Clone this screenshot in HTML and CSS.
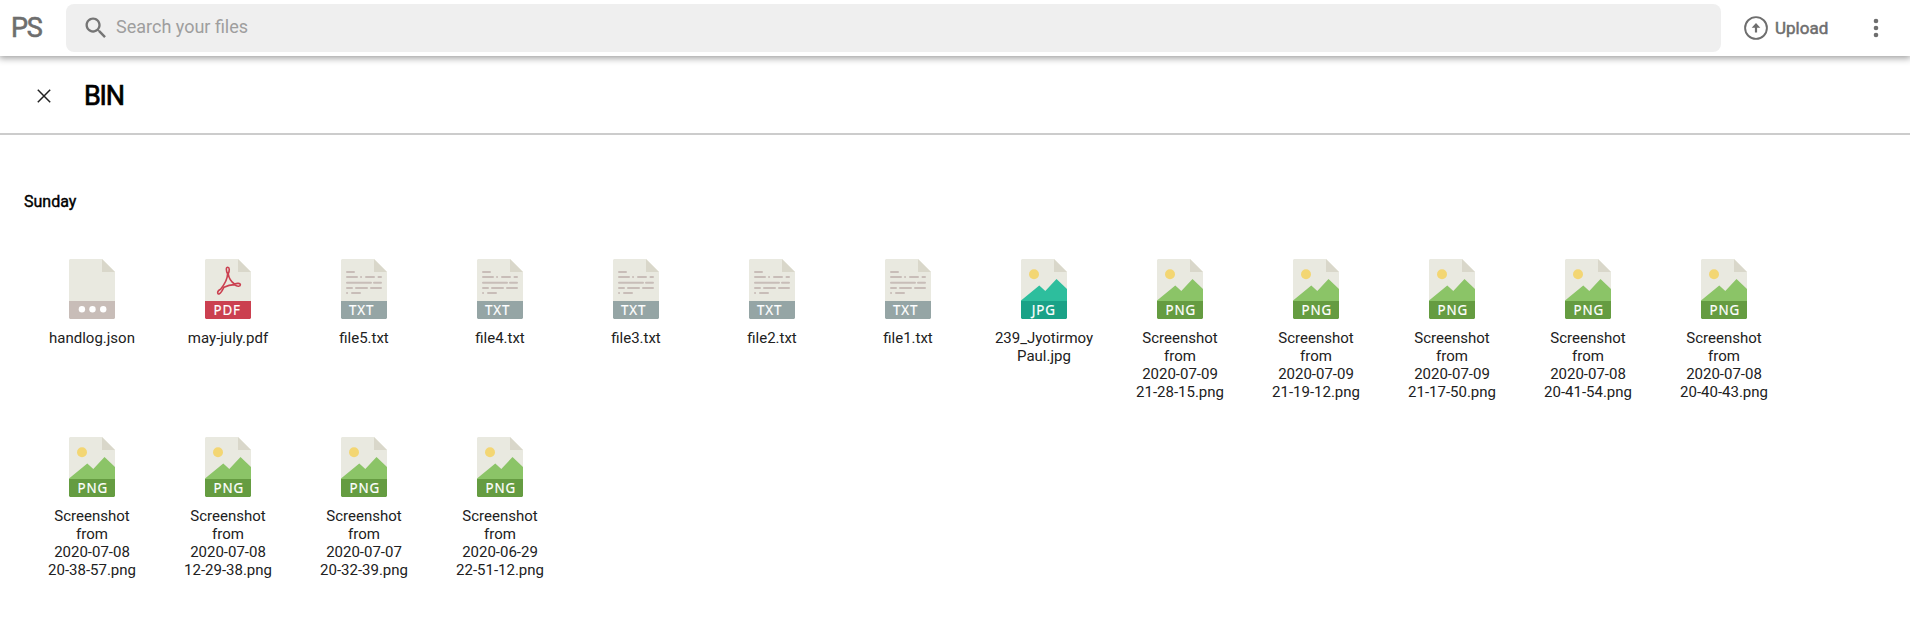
FILE: index.html
```html
<!DOCTYPE html>
<html lang="en">
<head>
<meta charset="utf-8">
<title>PS - Bin</title>
<link rel="stylesheet" href="styles.css">
</head>
<body>
<svg class="sprite" width="0" height="0">
  <symbol id="page" viewBox="0 0 46 60">
    <path fill="#e9e9e0" d="M1 0H33L46 13V43H0V1Z"/>
    <path fill="#d9d7ca" d="M33 0V13H46Z"/>
  </symbol>
  <symbol id="json" viewBox="0 0 46 60">
    <use href="#page"/>
    <path fill="#c8bdb8" d="M0 42H46V59L45 60H1L0 59Z"/>
    <g fill="#fff"><circle cx="12.900" cy="50.300" r="3.200"/><circle cx="23.500" cy="50.300" r="3.200"/><circle cx="34.200" cy="50.300" r="3.200"/></g>
  </symbol>
  <symbol id="pdf" viewBox="0 0 46 60">
    <use href="#page"/>
    <path fill="#cb4050" d="M0 42H46V59L45 60H1L0 59Z"/>
    <path fill="none" stroke="#cb4050" stroke-width="1.600" stroke-linejoin="round" d="M22.800 8.200C20.800 8.200 21 11.500 22.600 14.800C22.600 19 19 26 15.600 30.200C11.500 32 12.300 35.800 14.400 34.800C16.500 33.800 18 30 19 28.200C22 26.800 26 25.800 29.400 25.600C32.500 28.200 35.500 27.200 35.400 25.600C35.200 24 32 24.200 29.400 24.900C26 22.500 23.800 18.500 23.200 14.800C24.800 11.500 24.500 8.200 22.800 8.200Z"/>
  </symbol>
  <symbol id="txt" viewBox="0 0 46 60">
    <use href="#page"/>
    <path fill="none" stroke="#c8bdb8" stroke-width="2" stroke-linecap="round" d="M6 13H13M6 18H16M20 18h.1M25 18H33M37.500 18H40M6 23.700H30M33 23.700H40M6 29H11M15 29H26M30 29H40M6 34h.1M11 34H19"/>
    <path fill="#95a5a5" d="M0 42H46V59L45 60H1L0 59Z"/>
  </symbol>
  <symbol id="jpg" viewBox="0 0 46 60">
    <use href="#page"/>
    <circle cx="13" cy="15.300" r="5" fill="#f3d673"/>
    <path fill="#2dbe9d" d="M0 41.500L18.300 26.500L24.300 32L35.500 20L46 30V43H0Z"/>
    <path fill="#1aa287" d="M0 42H46V59L45 60H1L0 59Z"/>
  </symbol>
  <symbol id="png" viewBox="0 0 46 60">
    <use href="#page"/>
    <circle cx="13" cy="15.300" r="5" fill="#f3d673"/>
    <path fill="#8bc467" d="M0 41.500L18.300 26.500L24.300 32L35.500 20L46 30V43H0Z"/>
    <path fill="#659c41" d="M0 42H46V59L45 60H1L0 59Z"/>
  </symbol>
</svg>

<header class="topbar">
  <div class="logo">PS</div>
  <div class="search">
    <svg class="search-icon" width="28" height="28" viewBox="0 0 24 24"><path fill="#757575" d="M15.500 14h-.79l-.28-.27C15.410 12.590 16 11.110 16 9.500 16 5.910 13.090 3 9.500 3S3 5.910 3 9.500 5.910 16 9.500 16c1.610 0 3.090-.59 4.230-1.570l.27.28v.79l5 4.990L20.490 19l-4.990-5zm-6 0C7.010 14 5 11.990 5 9.500S7.010 5 9.500 5 14 7.010 14 9.500 11.990 14 9.500 14z"/></svg>
    <span class="placeholder">Search your files</span>
  </div>
  <div class="upload">
    <svg width="24" height="24" viewBox="0 0 24 24"><circle cx="12" cy="12" r="10.900" fill="none" stroke="#6e6e6e" stroke-width="1.900"/><path fill="#6e6e6e" d="M12 7L16.300 11.800H13.100V16.600H10.900V11.800H7.700Z"/></svg>
    <span>Upload</span>
  </div>
  <svg class="more" width="6" height="20" viewBox="0 0 6 20"><g fill="#6e6e6e"><circle cx="3" cy="3" r="2.300"/><circle cx="3" cy="10" r="2.300"/><circle cx="3" cy="17" r="2.300"/></g></svg>
</header>

<div class="titlebar">
  <svg class="close" width="14" height="14" viewBox="0 0 14 14"><path d="M.8.8L13.200 13.200M13.200.8L.8 13.200" stroke="#222" stroke-width="1.500"/></svg>
  <h1>BIN</h1>
</div>

<main>
  <h2>Sunday</h2>
  <div class="files">
    <div class="file"><svg class="icon"><use href="#json"/></svg><p>handlog.json</p></div>
    <div class="file"><svg class="icon"><use href="#pdf"/><text class="tag" x="9.600" y="56">PDF</text></svg><p>may-july.pdf</p></div>
    <div class="file"><svg class="icon"><use href="#txt"/><text class="tag" x="8.900" y="56">TXT</text></svg><p>file5.txt</p></div>
    <div class="file"><svg class="icon"><use href="#txt"/><text class="tag" x="8.900" y="56">TXT</text></svg><p>file4.txt</p></div>
    <div class="file"><svg class="icon"><use href="#txt"/><text class="tag" x="8.900" y="56">TXT</text></svg><p>file3.txt</p></div>
    <div class="file"><svg class="icon"><use href="#txt"/><text class="tag" x="8.900" y="56">TXT</text></svg><p>file2.txt</p></div>
    <div class="file"><svg class="icon"><use href="#txt"/><text class="tag" x="8.900" y="56">TXT</text></svg><p>file1.txt</p></div>
    <div class="file"><svg class="icon"><use href="#jpg"/><text class="tag" x="12" y="56">JPG</text></svg><p>239_Jyotirmoy<br>Paul.jpg</p></div>
    <div class="file"><svg class="icon"><use href="#png"/><text class="tag" x="9.600" y="56">PNG</text></svg><p>Screenshot<br>from<br>2020-07-09<br>21-28-15.png</p></div>
    <div class="file"><svg class="icon"><use href="#png"/><text class="tag" x="9.600" y="56">PNG</text></svg><p>Screenshot<br>from<br>2020-07-09<br>21-19-12.png</p></div>
    <div class="file"><svg class="icon"><use href="#png"/><text class="tag" x="9.600" y="56">PNG</text></svg><p>Screenshot<br>from<br>2020-07-09<br>21-17-50.png</p></div>
    <div class="file"><svg class="icon"><use href="#png"/><text class="tag" x="9.600" y="56">PNG</text></svg><p>Screenshot<br>from<br>2020-07-08<br>20-41-54.png</p></div>
    <div class="file"><svg class="icon"><use href="#png"/><text class="tag" x="9.600" y="56">PNG</text></svg><p>Screenshot<br>from<br>2020-07-08<br>20-40-43.png</p></div>
    <div class="file"><svg class="icon"><use href="#png"/><text class="tag" x="9.600" y="56">PNG</text></svg><p>Screenshot<br>from<br>2020-07-08<br>20-38-57.png</p></div>
    <div class="file"><svg class="icon"><use href="#png"/><text class="tag" x="9.600" y="56">PNG</text></svg><p>Screenshot<br>from<br>2020-07-08<br>12-29-38.png</p></div>
    <div class="file"><svg class="icon"><use href="#png"/><text class="tag" x="9.600" y="56">PNG</text></svg><p>Screenshot<br>from<br>2020-07-07<br>20-32-39.png</p></div>
    <div class="file"><svg class="icon"><use href="#png"/><text class="tag" x="9.600" y="56">PNG</text></svg><p>Screenshot<br>from<br>2020-06-29<br>22-51-12.png</p></div>
  </div>
</main>
</body>
</html>
```
FILE: styles.css
```css
* { box-sizing: border-box; }
body {
  margin: 0;
  height: 625px;
  overflow: hidden;
  background: #fff;
  font-family: Roboto, "Liberation Sans", sans-serif;
}
.sprite { display: block; }
h1, h2, p { margin: 0; }
.topbar {
  display: flex;
  align-items: center;
  height: 56px;
  padding: 0 31px 0 11px;
  box-shadow: 0 1px 7px 1px rgba(0, 0, 0, .4);
  color: #6e6e6e;
}
.logo {
  width: 55px;
  font-size: 27px;
  line-height: 56px;
  letter-spacing: -1.2px;
  -webkit-text-stroke: .6px #6e6e6e;
}
.search {
  display: flex;
  align-items: center;
  flex: 1;
  height: 48px;
  padding-left: 16px;
  background: #efefef;
  border-radius: 8px;
}
.placeholder {
  margin-left: 6px;
  padding-bottom: 3px;
  font-size: 18px;
  line-height: 44px;
  color: #9e9e9e;
}
.upload {
  display: flex;
  align-items: center;
  gap: 7px;
  width: 152px;
  padding-left: 23px;
  font-size: 17px;
  -webkit-text-stroke: .5px #6e6e6e;
}
.titlebar {
  display: flex;
  align-items: center;
  gap: 33px;
  height: 79px;
  padding: 2px 0 0 37px;
  border-bottom: 2px solid #ccc;
}
.titlebar h1 {
  font-size: 27px;
  font-weight: 400;
  letter-spacing: -1.2px;
  -webkit-text-stroke: .7px #000;
}
main { padding: 57px 24px 0; }
main h2 {
  font-size: 16px;
  line-height: 20px;
  font-weight: 400;
  -webkit-text-stroke: .4px #000;
}
.files {
  display: grid;
  grid-template-columns: repeat(13, 136px);
  row-gap: 36px;
  margin-top: 47px;
}
.file {
  display: flex;
  flex-direction: column;
  align-items: center;
}
.icon { width: 46px; height: 60px; }
.file p {
  margin-top: 10px;
  font-size: 15px;
  line-height: 18px;
  text-align: center;
  color: #212121;
}
.tag {
  font-family: "Noto Sans", sans-serif;
  font-size: 15px;
  letter-spacing: 1px;
  fill: #fff;
  stroke: #fff;
  stroke-width: .2px;
  transform: scaleX(.89);
}
```
